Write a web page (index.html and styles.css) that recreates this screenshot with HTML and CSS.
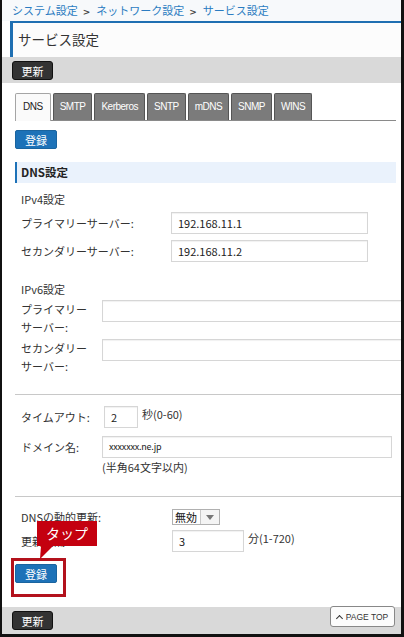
FILE: index.html
```html
<!DOCTYPE html>
<html lang="ja">
<head>
<meta charset="utf-8">
<title>サービス設定</title>
<link rel="stylesheet" href="styles.css">
</head>
<body>
<div class="frame">
  <nav class="crumbs">
    <a>システム設定</a><span class="sep">&gt;</span><a>ネットワーク設定</a><span class="sep">&gt;</span><a>サービス設定</a>
  </nav>
  <h1 class="title">サービス設定</h1>
  <div class="toolbar"><button class="btn-dark">更新</button></div>

  <main class="content">
    <ul class="tabs">
      <li class="tab active">DNS</li>
      <li class="tab">SMTP</li>
      <li class="tab">Kerberos</li>
      <li class="tab">SNTP</li>
      <li class="tab">mDNS</li>
      <li class="tab">SNMP</li>
      <li class="tab">WINS</li>
    </ul>
    <button class="btn-blue btn-top">登録</button>

    <h2 class="section-head">DNS設定</h2>

    <div class="group">
      <p class="group-title">IPv4設定</p>
      <div class="row row-v4 first"><span class="label">プライマリーサーバー:</span><span class="field field-v4">192.168.11.1</span></div>
      <div class="row row-v4 second"><span class="label">セカンダリーサーバー:</span><span class="field field-v4">192.168.11.2</span></div>

      <p class="group-title v6title">IPv6設定</p>
      <div class="row row-v6 first"><span class="label">プライマリー<br>サーバー:</span><span class="field field-v6"></span></div>
      <div class="row row-v6 v6second"><span class="label">セカンダリー<br>サーバー:</span><span class="field field-v6"></span></div>
    </div>

    <hr class="divider div1">

    <div class="group">
      <div class="row row-timeout"><span class="label">タイムアウト:</span><span class="field field-timeout">2</span><span class="unit">秒(0-60)</span></div>
      <div class="row row-domain"><span class="label">ドメイン名:</span><span class="field field-domain">xxxxxxx.ne.jp</span></div>
      <p class="note">(半角64文字以内)</p>
    </div>

    <hr class="divider div2">

    <div class="group">
      <div class="row row-dyn"><span class="label">DNSの動的更新:</span><span class="select"><span class="select-val">無効</span><span class="select-arrow"></span></span></div>
      <div class="row row-int"><span class="label">更新間隔:</span><span class="field field-int">3</span><span class="unit">分(1-720)</span></div>
    </div>

    <div class="highlight"><button class="btn-blue">登録</button></div>
  </main>

  <div class="toolbar bottom">
    <button class="btn-dark">更新</button>
    <button class="pagetop"><span class="caret"></span>PAGE TOP</button>
  </div>

  <div class="callout">タップ
    <svg class="callout-tail" width="16" height="14" viewBox="0 0 16 14"><polygon points="3,0 15,0 2,13" fill="#c4000f"/></svg>
  </div>
</div>
</body>
</html>
```

FILE: styles.css
```css
* { box-sizing: border-box; }
html, body { margin: 0; padding: 0; background: #fff; }
body {
  font-family: "Noto Sans CJK JP", "Noto Sans", sans-serif;
  font-size: 11px;
  color: #333;
}
.frame {
  position: relative;
  width: 404px;
  height: 637px;
  border-left: 2px solid #111;
  border-right: 3px solid #111;
  border-bottom: 3px solid #111;
  background: #fff;
  overflow: hidden;
  display: flex;
  flex-direction: column;
}
.crumbs {
  height: 21px;
  line-height: 20px;
  padding-left: 10px;
  background: #f7f9fb;
  font-size: 11px;
  white-space: nowrap;
}
.crumbs a { color: #2b7cc1; }
.crumbs .sep { color: #444; font-size: 9px; margin: 0 6px 0 5px; font-family: "DejaVu Sans", sans-serif; font-weight: bold; }
.title {
  margin: 0 0 0 8px;
  height: 36px;
  border-top: 2px solid #1f6fb2;
  border-left: 3px solid #1f6fb2;
  background: #fcfcfc;
  font-size: 13.5px;
  font-weight: normal;
  color: #333;
  line-height: 33px;
  padding-left: 5px;
}
.toolbar {
  position: relative;
  height: 26px;
  background: #d9d9d9;
  padding: 4px 0 0 10px;
}
.btn-dark {
  display: block;
  width: 41px;
  height: 19px;
  padding: 0;
  background: #333;
  border: 1px solid #111;
  border-radius: 3px;
  color: #fff;
  font-family: inherit;
  font-size: 11px;
  line-height: 16px;
}
.content {
  flex: 1;
  padding: 10px 5px 0 13px;
  position: relative;
}
.tabs {
  display: flex;
  gap: 2px;
  margin: 0;
  padding: 0;
  list-style: none;
  height: 28px;
  border-bottom: 1px solid #8a8a8a;
}
.tab {
  height: 27px;
  padding: 0 6px;
  background: #7b7b7b;
  border: 1px solid #555;
  border-bottom: none;
  border-radius: 2px 2px 0 0;
  color: #fff;
  font-family: "Liberation Sans", sans-serif;
  font-size: 10px;
  letter-spacing: -0.5px;
  line-height: 26px;
}
.tab.active {
  padding: 0 7px;
  background: #fafafa;
  border-color: #a5a5a5;
  color: #222;
  height: 28px;
}
.btn-blue {
  display: block;
  width: 42px;
  height: 19px;
  padding: 0;
  background: #1d72b8;
  border: 1px solid #1a649f;
  border-radius: 2px;
  color: #fff;
  font-family: inherit;
  font-size: 11px;
  line-height: 16px;
}
.btn-top { margin-top: 9px; }
.section-head {
  margin: 13px 0 0 0;
  height: 21px;
  background: #eaf2fc;
  border-left: 2px solid #1d72b8;
  padding-left: 4px;
  font-size: 11.5px;
  font-weight: bold;
  line-height: 21px;
  color: #222;
}
.group { padding-left: 6px; }
.group-title { margin: 7px 0 0 0; line-height: 18px; }
.v6title { margin-top: 18px; }
.row { display: flex; align-items: center; }
.row .label { flex: none; }
.row-v4 .label { width: 150px; }
.row-v4.first { margin-top: 4px; }
.row-v4.second { margin-top: 6px; }
.row-v6 { align-items: flex-start; }
.row-v6 .label { width: 81px; line-height: 18px; }
.row-v6.first { margin-top: 2px; }
.row-v6.v6second { margin-top: 3px; }
.field {
  flex: none;
  display: block;
  height: 22px;
  border: 1px solid #d6d6d6;
  box-shadow: inset 0 1px 1px rgba(0,0,0,0.06);
  background: #fff;
  padding-left: 6px;
  line-height: 20px;
  font-size: 11px;
  color: #222;
}
.field-v4 { width: 197px; }
.field-v6 { width: 320px; }
.divider {
  margin: 0 -5px 0 0;
  border: none;
  border-top: 1px solid #c8c8c8;
  height: 0;
}
.div1 { margin-top: 19px; }
.div2 { margin-top: 20px; }
.row-timeout { margin-top: 11px; }
.row-timeout .label { width: 83px; }
.field-timeout { width: 34px; }
.unit { margin-left: 4px; align-self: flex-start; line-height: 16px; }
.row-domain { margin-top: 8px; }
.row-domain .label { width: 81px; }
.field-domain { width: 290px; font-size: 9px; letter-spacing: -0.2px; }
.note { margin: 0 0 0 81px; line-height: 18px; }
.row-dyn { margin-top: 12px; }
.row-dyn .label { width: 151px; }
.select {
  display: flex;
  height: 16px;
  border: 1px solid #b0b0b0;
  background: #f4f4f4;
}
.select-val {
  width: 28px;
  background: #fff;
  border-right: 1px solid #c8c8c8;
  padding-left: 2px;
  line-height: 14px;
  color: #111;
}
.select-arrow {
  width: 18px;
  position: relative;
}
.select-arrow::after {
  content: "";
  position: absolute;
  left: 5px;
  top: 5px;
  border-left: 4px solid transparent;
  border-right: 4px solid transparent;
  border-top: 5px solid #777;
}
.row-int { margin-top: 5px; }
.row-int .label { width: 151px; }
.field-int { width: 72px; }
.highlight {
  position: relative;
  margin-top: 12px;
  width: 42px;
}
.highlight::after {
  content: "";
  position: absolute;
  left: -4px;
  top: -6px;
  width: 49px;
  height: 33px;
  border: 3px solid #b3121c;
}
.toolbar.bottom { height: 27px; }
.pagetop {
  position: absolute;
  right: 6px;
  top: -1px;
  width: 65px;
  height: 21px;
  padding: 0;
  background: #fcfcfc;
  border: 1px solid #888;
  border-radius: 3px;
  font-family: "Liberation Sans", sans-serif;
  font-size: 8.5px;
  color: #333;
  display: flex;
  align-items: center;
  justify-content: center;
  gap: 4px;
}
.caret {
  width: 5px;
  height: 5px;
  border-left: 1px solid #333;
  border-top: 1px solid #333;
  transform: rotate(45deg);
  margin-top: 3px;
}
.callout {
  position: absolute;
  left: 35px;
  top: 521px;
  width: 60px;
  height: 25px;
  background: #c4000f;
  color: #fff;
  font-size: 14px;
  line-height: 24px;
  text-align: center;
}
.callout-tail {
  position: absolute;
  left: 1px;
  top: 25px;
  display: block;
}
```
